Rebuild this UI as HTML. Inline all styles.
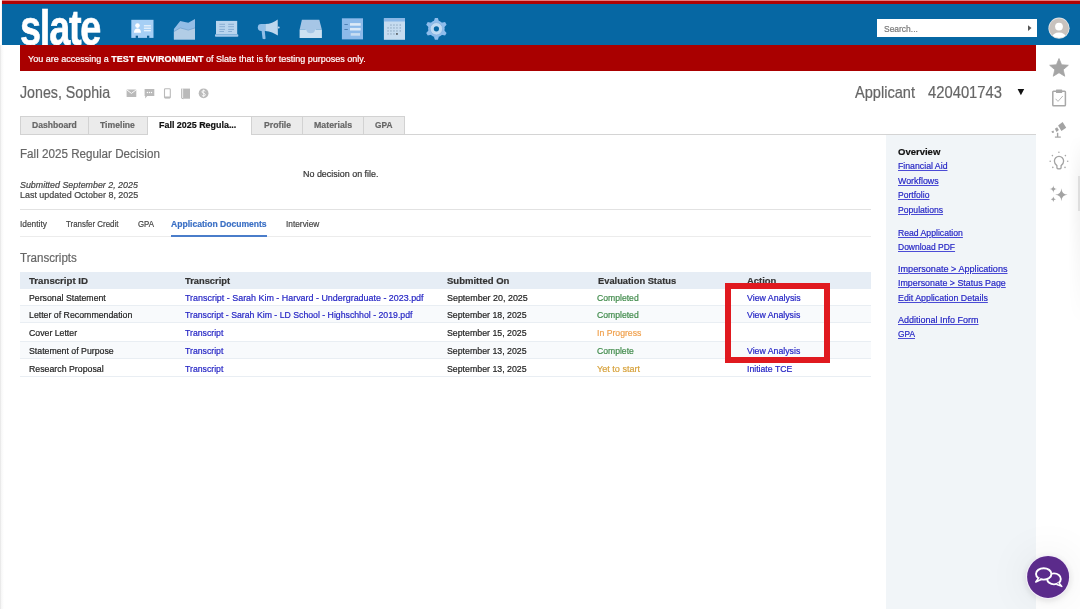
<!DOCTYPE html>
<html><head><meta charset="utf-8">
<style>
*{margin:0;padding:0;box-sizing:border-box}
html,body{width:1080px;height:609px;overflow:hidden;background:#fff;font-family:"Liberation Sans",sans-serif;color:#222}
.a{position:absolute}
.t{position:absolute;line-height:1;white-space:nowrap;-webkit-text-stroke:0.2px currentColor;font-variant-ligatures:none}
svg{position:absolute;overflow:visible}
</style></head><body>
<div class="a" style="left:0;top:45px;width:1px;height:564px;background:#eaeaea"></div><div class="a" style="left:1px;top:0;width:3px;height:609px;background:linear-gradient(to right,#f6f6f6,#fff)"></div>
<div class="a" style="left:2px;top:0;width:1078px;height:4px;background:#b00202"></div>
<div class="a" style="left:2px;top:0;width:1078px;height:1px;background:#e87a7a"></div>
<div class="a" style="left:2px;top:4px;width:1078px;height:41px;background:#0667a3"></div>
<div class="a" style="left:877px;top:19px;width:160px;height:18px;background:#fff"></div>
<svg style="left:0;top:0" width="1080" height="609">
 <polygon points="1028,25.2 1031.5,28.1 1028,31" fill="#555"/>
</svg>
<!-- sidebar -->
<div class="a" style="left:886px;top:135px;width:150px;height:474px;background:#f1f5f8"></div>
<!-- lines -->
<div class="a" style="left:20px;top:209px;width:851px;height:1px;background:#e2e2e2"></div>
<div class="a" style="left:20px;top:236px;width:851px;height:1px;background:#ececec"></div>
<div class="a" style="left:171px;top:235px;width:96px;height:2px;background:#4a7dca"></div>
<!-- table -->
<div class="a" style="left:20px;top:272px;width:851px;height:17px;background:#e6edf5"></div>
<div class="a" style="left:20px;top:305px;width:851px;height:18px;background:#f8fafc;border-top:1px solid #e9eef3;border-bottom:1px solid #e9eef3"></div>
<div class="a" style="left:20px;top:341px;width:851px;height:18px;background:#f8fafc;border-top:1px solid #e9eef3;border-bottom:1px solid #e9eef3"></div>
<div class="a" style="left:20px;top:376px;width:851px;height:1px;background:#e9eef3"></div>
<!-- tabs -->
<div class="a" style="left:20px;top:134px;width:1016px;height:1px;background:#d4d4d4"></div>
<div class="a" style="left:20px;top:116px;width:69px;height:19px;background:#ebebeb;border:1px solid #d2d2d2"></div>
<div class="a" style="left:88px;top:116px;width:60px;height:19px;background:#ebebeb;border:1px solid #d2d2d2"></div>
<div class="a" style="left:251px;top:116px;width:52px;height:19px;background:#ebebeb;border:1px solid #d2d2d2"></div>
<div class="a" style="left:302px;top:116px;width:62px;height:19px;background:#ebebeb;border:1px solid #d2d2d2"></div>
<div class="a" style="left:363px;top:116px;width:42px;height:19px;background:#ebebeb;border:1px solid #d2d2d2"></div>
<div class="a" style="left:147px;top:116px;width:105px;height:19px;background:#fff;border:1px solid #d2d2d2;border-bottom:none"></div>
<!-- logo -->
<div class="t" id="logo" style="left:19.6px;top:3.2px;font-size:49.5px;font-weight:bold;color:#fff;transform-origin:0 0;transform:scaleX(0.765);letter-spacing:-1.6px;-webkit-text-stroke:0.7px #fff">slate</div>
<div class="a" style="left:20px;top:45px;width:1016px;height:26px;background:#a90000"></div>
<svg style="left:0;top:0" width="1080" height="609">
 <!-- icon1 id card -->
 <rect x="131.3" y="19.8" width="22.2" height="18.1" fill="#a6cff5"/>
 <rect x="135.7" y="35.7" width="2.3" height="2.2" fill="#0b5f95"/>
 <rect x="147" y="35.7" width="2.3" height="2.2" fill="#0b5f95"/>
 <circle cx="137.5" cy="25.6" r="2.3" fill="#fff"/>
 <path d="M133.9 32.7 Q134.2 28.6 137.5 28.6 Q140.8 28.6 141 32.7 Z" fill="#fff"/>
 <rect x="143.9" y="25.2" width="7" height="1.2" fill="#eef6fd"/>
 <rect x="143.9" y="27.6" width="7" height="1.2" fill="#eef6fd"/>
 <rect x="143.9" y="30.1" width="7" height="1.2" fill="#eef6fd"/>
 <!-- icon2 area chart -->
 <polygon points="173.9,29 180.2,20.9 188.3,22.7 195,19 195,39.4 173.9,39.4" fill="#93bde6"/>
 <polygon points="173.9,31.6 180.2,27.9 188.3,30.1 195,27.9 195,39.4 173.9,39.4" fill="#b2cde6"/>
 <polyline points="173.9,31.6 180.2,27.9 188.3,30.1 195,27.9" fill="none" stroke="#6f9fcb" stroke-width="0.7"/>
 <!-- icon3 laptop -->
 <rect x="216" y="20.9" width="21.2" height="13.3" fill="#b9d5ee"/>
 <rect x="215" y="34.2" width="23.3" height="2.6" rx="0.8" fill="#a3c8ea"/>
 <g stroke="#82a9cf" stroke-width="0.9">
  <line x1="219.4" y1="24.3" x2="225" y2="24.3"/><line x1="228.2" y1="24.3" x2="234" y2="24.3"/>
  <line x1="219.4" y1="26.7" x2="225" y2="26.7"/><line x1="228.2" y1="26.7" x2="234" y2="26.7"/>
  <line x1="219.4" y1="29.4" x2="225" y2="29.4"/><line x1="228.2" y1="29.4" x2="234" y2="29.4"/>
  <line x1="219.4" y1="31.5" x2="224" y2="31.5"/><line x1="228.2" y1="31.5" x2="232" y2="31.5"/>
 </g>
 <!-- icon4 megaphone -->
 <path d="M261.6 31 L264.8 31 L265.6 38.8 Q264.2 39.6 262.6 38.8 Z" fill="#92bfe8"/>
 <path d="M265.5 24.1 L261.2 24.1 Q257.8 24.1 257.8 27.5 Q257.8 30.9 261.2 30.9 L265.5 30.9 Z" fill="#92bfe8"/>
 <path d="M265.3 24.1 Q272.5 23.6 277.7 19.4 L277.9 35.6 Q272.5 31.6 265.3 30.9 Z" fill="#bed7ee"/>
 <circle cx="278.7" cy="27.6" r="1" fill="#bed7ee"/>
 <!-- icon5 inbox -->
 <polygon points="301.9,19.8 319.3,19.8 321.9,29.8 299.6,29.8" fill="#a6c6e6"/>
 <rect x="305.5" y="29" width="10.5" height="5" fill="#a6c6e6"/>
 <path d="M299.6 29.8 L306.3 29.8 Q306.8 33.3 310.7 33.3 Q314.6 33.3 315.1 29.8 L321.9 29.8 L321.9 37.9 L299.6 37.9 Z" fill="#cde1f2"/>
 <!-- icon6 form -->
 <rect x="341.9" y="18.3" width="21.1" height="21.1" fill="#8cbaea"/>
 <rect x="350" y="23.1" width="10.7" height="2.6" fill="#dceaf7"/>
 <rect x="350" y="27.9" width="10.7" height="2.6" fill="#dceaf7"/>
 <rect x="350.7" y="33.1" width="9.3" height="2.6" fill="#c9def2"/>
 <rect x="344.4" y="24.1" width="3.4" height="0.8" fill="#3f72a6"/>
 <rect x="344.4" y="29" width="3.4" height="0.8" fill="#3f72a6"/>
 <!-- icon7 calendar -->
 <rect x="383.9" y="18.3" width="21.1" height="21.5" fill="#c6dcf0"/>
 <rect x="383.9" y="18.3" width="21.1" height="3.2" fill="#8ab8e8"/>
 <g fill="#90a9c2">
  <rect x="390.3" y="24.4" width="1.3" height="1.3"/><rect x="393.3" y="24.4" width="1.3" height="1.3"/><rect x="396.3" y="24.4" width="1.3" height="1.3"/><rect x="399.6" y="24.4" width="1.3" height="1.3"/>
  <rect x="387.4" y="27.3" width="1.3" height="1.3"/><rect x="390.3" y="27.3" width="1.3" height="1.3"/><rect x="393.3" y="27.3" width="1.3" height="1.3"/><rect x="396.3" y="27.3" width="1.3" height="1.3"/><rect x="399.6" y="27.3" width="1.3" height="1.3"/>
  <rect x="387.4" y="30.3" width="1.3" height="1.3"/><rect x="390.3" y="30.3" width="1.3" height="1.3"/><rect x="393.3" y="30.3" width="1.3" height="1.3"/><rect x="396.3" y="30.3" width="1.3" height="1.3"/><rect x="399.6" y="30.3" width="1.3" height="1.3"/>
  <rect x="387.4" y="33.3" width="1.3" height="1.3"/><rect x="390.3" y="33.3" width="1.3" height="1.3"/><rect x="393.3" y="33.3" width="1.3" height="1.3"/>
 </g>
 <rect x="396.2" y="33.2" width="1.5" height="1.5" fill="#333"/>
 <!-- icon8 gear -->
 <g transform="translate(436.4,28.8)">
  <g fill="#8fbdec">
   <circle r="8.3"/>
   <polygon points="-2.6,-7.4 2.6,-7.4 1.5,-10.9 -1.5,-10.9" transform="rotate(0)"/><polygon points="-2.6,-7.4 2.6,-7.4 1.5,-10.9 -1.5,-10.9" transform="rotate(60)"/><polygon points="-2.6,-7.4 2.6,-7.4 1.5,-10.9 -1.5,-10.9" transform="rotate(120)"/><polygon points="-2.6,-7.4 2.6,-7.4 1.5,-10.9 -1.5,-10.9" transform="rotate(180)"/><polygon points="-2.6,-7.4 2.6,-7.4 1.5,-10.9 -1.5,-10.9" transform="rotate(240)"/><polygon points="-2.6,-7.4 2.6,-7.4 1.5,-10.9 -1.5,-10.9" transform="rotate(300)"/>
  </g>
  <circle r="6.2" fill="#bfdaf3" stroke="#7aa9d9" stroke-width="0.6"/>
  <circle r="2.6" fill="#0667a3"/>
 </g>
 <!-- avatar -->
 <circle cx="1059" cy="28.2" r="10.6" fill="#dfe3e6"/>
 <clipPath id="avc"><circle cx="1059" cy="28.2" r="9.8"/></clipPath>
 <circle cx="1059" cy="28.2" r="9.8" fill="#c8c2be"/>
 <g clip-path="url(#avc)" fill="#fff">
  <circle cx="1059" cy="26.6" r="3.9"/>
  <ellipse cx="1059" cy="37.5" rx="7" ry="5"/>
 </g>
 <!-- name icons -->
 <g fill="#bababa">
  <rect x="126.6" y="89.5" width="9.7" height="7.5" rx="0.6"/>
  <path d="M144.6 89 H154.3 V96 H147.2 L145.2 98.6 V96 H144.6 Z"/>
  <rect x="164.5" y="88.7" width="5.8" height="9.3" rx="0.9" fill="none" stroke="#bababa" stroke-width="1.1"/>
  <rect x="164.5" y="96.6" width="5.8" height="1.6" rx="0.5"/>
  <rect x="182.4" y="88.6" width="7.6" height="10.1"/>
  <circle cx="203.6" cy="93.3" r="4.9"/>
 </g>
 <polyline points="126.8,89.9 131.45,93.4 136.1,89.9" fill="none" stroke="#fff" stroke-width="0.9"/>
 <g fill="#fff"><circle cx="147.4" cy="92.5" r="0.7"/><circle cx="149.45" cy="92.5" r="0.7"/><circle cx="151.5" cy="92.5" r="0.7"/></g>
 <path d="M181.6 88.6 V98.2 L183.3 98.8" fill="none" stroke="#bababa" stroke-width="1"/>
 <line x1="182.7" y1="89" x2="182.7" y2="98" stroke="#fff" stroke-width="0.6"/>
 <path d="M205.3 91.4 Q204.8 90.6 203.6 90.6 Q202 90.6 202 91.9 Q202 93 203.6 93.3 Q205.3 93.6 205.3 94.8 Q205.3 96 203.6 96 Q202.3 96 201.8 95.1" fill="none" stroke="#fff" stroke-width="1"/><line x1="203.6" y1="89.5" x2="203.6" y2="97.1" stroke="#fff" stroke-width="0.7"/>
 <!-- dropdown triangle -->
 <polygon points="1017.6,88.9 1024.2,88.9 1020.9,95.3" fill="#111"/>
 <!-- right rail icons -->
 <polygon fill="#a5a5a5" transform="translate(1059,68.3)" points="0.00,-9.80 2.59,-3.56 9.32,-3.03 4.18,1.36 5.76,7.93 0.00,4.40 -5.76,7.93 -4.18,1.36 -9.32,-3.03 -2.59,-3.56" stroke="#a5a5a5" stroke-width="0.8" stroke-linejoin="round"/>
 <rect x="1052.8" y="91.2" width="12.6" height="14.6" rx="0.8" fill="none" stroke="#a8a8a8" stroke-width="1.5"/>
 <rect x="1056" y="89.5" width="6.2" height="3.4" rx="0.5" fill="#a8a8a8"/>
 <polyline points="1055.6,98.8 1058,101.4 1062.8,96" fill="none" stroke="#b0b0b0" stroke-width="0.9"/>
 <g fill="#a3a3a3">
  <polygon points="1058.1,125.6 1062.6,122 1066.2,127.7 1061.4,130.9"/>
  <polygon points="1054.9,128.8 1057.1,127.3 1058.9,130.1 1056.5,131.9"/>
  <polygon points="1051.4,131.4 1053.5,130.6 1054.1,132.5 1052.3,133.1"/>
  <rect x="1056.9" y="132.8" width="1.4" height="4.2"/>
  <rect x="1054.9" y="136.5" width="5.9" height="1.2"/>
 </g>
 <g fill="none" stroke="#a3a3a3" stroke-width="1.3">
  <path d="M1056.9 167.5 V165.6 Q1054.4 164 1054.4 161 A4.6 4.6 0 1 1 1063.6 161 Q1063.6 164 1061.1 165.6 V167.5 Q1061.1 168.9 1059 168.9 Q1056.9 168.9 1056.9 167.5 Z"/>
 </g>
 <g fill="#a8a8a8">
  <circle cx="1058.9" cy="152.3" r="0.8"/><circle cx="1052.4" cy="155.6" r="0.8"/><circle cx="1065.4" cy="155.6" r="0.8"/>
  <circle cx="1050.2" cy="161.3" r="0.8"/><circle cx="1067.7" cy="161.3" r="0.8"/><circle cx="1052.8" cy="167.4" r="0.8"/><circle cx="1065" cy="167.4" r="0.8"/>
 </g>
 <g fill="#a3a3a3">
  <path d="M1061.40 188.20 Q1061.65 194.44 1067.70 194.70 Q1061.65 194.96 1061.40 201.20 Q1061.15 194.96 1055.10 194.70 Q1061.15 194.44 1061.40 188.20 Z"/>
  <path d="M1053.30 185.20 Q1053.45 188.94 1057.10 189.10 Q1053.45 189.26 1053.30 193.00 Q1053.15 189.26 1049.50 189.10 Q1053.15 188.94 1053.30 185.20 Z"/>
  <path d="M1053.30 196.60 Q1053.46 199.14 1055.90 199.30 Q1053.46 199.46 1053.30 202.00 Q1053.14 199.46 1050.70 199.30 Q1053.14 199.14 1053.30 196.60 Z"/>
 </g>
</svg>
<!-- right edge shadow / handle -->
<div class="a" style="left:1068px;top:135px;width:12px;height:260px;background:linear-gradient(to right, rgba(0,0,0,0), rgba(0,0,0,0.045));-webkit-mask-image:linear-gradient(to bottom, transparent 0, #000 45px, #000 80px, transparent 190px)"></div>
<div class="a" style="left:1078px;top:176px;width:2px;height:35px;background:#dedede"></div>
<div class="t" id="banner" style="left:28.20px;top:54.79px;font-size:9.30px;transform-origin:0 0;transform:scaleX(0.9695);color:#fff">You are accessing a <b>TEST ENVIRONMENT</b> of Slate that is for testing purposes only.</div>
<div class="t" id="search" style="left:883.80px;top:23.87px;font-size:9.50px;transform-origin:0 0;transform:scaleX(0.8906);color:#777">Search...</div>
<div class="t" id="name" style="left:19.80px;top:84.86px;font-size:16.00px;transform-origin:0 0;transform:scaleX(0.8889);color:#666">Jones, Sophia</div>
<div class="t" id="appl" style="left:855.00px;top:85.13px;font-size:15.70px;transform-origin:0 0;transform:scaleX(0.9303);color:#666">Applicant</div>
<div class="t" id="num" style="left:927.80px;top:85.15px;font-size:15.70px;transform-origin:0 0;transform:scaleX(0.9427);color:#666">420401743</div>
<div class="t" id="tab1" style="left:32.40px;top:120.23px;font-size:9.40px;transform-origin:0 0;transform:scaleX(0.9150);font-weight:bold;color:#666">Dashboard</div>
<div class="t" id="tab2" style="left:100.40px;top:120.23px;font-size:9.40px;transform-origin:0 0;transform:scaleX(0.9215);font-weight:bold;color:#666">Timeline</div>
<div class="t" id="tab3" style="left:159.00px;top:120.23px;font-size:9.40px;transform-origin:0 0;transform:scaleX(0.9513);font-weight:bold;color:#111">Fall 2025 Regula...</div>
<div class="t" id="tab4" style="left:264.00px;top:120.23px;font-size:9.40px;transform-origin:0 0;transform:scaleX(0.9300);font-weight:bold;color:#666">Profile</div>
<div class="t" id="tab5" style="left:314.00px;top:120.23px;font-size:9.40px;transform-origin:0 0;transform:scaleX(0.9377);font-weight:bold;color:#666">Materials</div>
<div class="t" id="tab6" style="left:375.00px;top:120.23px;font-size:9.40px;transform-origin:0 0;transform:scaleX(0.8854);font-weight:bold;color:#666">GPA</div>
<div class="t" id="h2" style="left:19.90px;top:147.96px;font-size:12.50px;transform-origin:0 0;transform:scaleX(0.9321);color:#666">Fall 2025 Regular Decision</div>
<div class="t" id="nodec" style="left:302.80px;top:169.59px;font-size:9.30px;transform-origin:0 0;transform:scaleX(0.9611);color:#333">No decision on file.</div>
<div class="t" id="subm" style="left:19.80px;top:179.63px;font-size:9.40px;transform-origin:0 0;transform:scaleX(0.9458);color:#444;font-style:italic">Submitted September 2, 2025</div>
<div class="t" id="upd" style="left:19.80px;top:190.23px;font-size:9.40px;transform-origin:0 0;transform:scaleX(0.9532);color:#444">Last updated October 8, 2025</div>
<div class="t" id="st1" style="left:19.80px;top:219.99px;font-size:9.30px;transform-origin:0 0;transform:scaleX(0.8971);color:#444">Identity</div>
<div class="t" id="st2" style="left:66.40px;top:219.99px;font-size:9.30px;transform-origin:0 0;transform:scaleX(0.8506);color:#444">Transfer Credit</div>
<div class="t" id="st3" style="left:138.20px;top:219.99px;font-size:9.30px;transform-origin:0 0;transform:scaleX(0.8417);color:#444">GPA</div>
<div class="t" id="st4" style="left:171.40px;top:219.99px;font-size:9.30px;transform-origin:0 0;transform:scaleX(0.9211);color:#3a6fc4;font-weight:bold">Application Documents</div>
<div class="t" id="st5" style="left:285.60px;top:219.99px;font-size:9.30px;transform-origin:0 0;transform:scaleX(0.8942);color:#444">Interview</div>
<div class="t" id="trans" style="left:19.80px;top:251.76px;font-size:12.50px;transform-origin:0 0;transform:scaleX(0.9265);color:#666">Transcripts</div>
<div class="t" id="th1" style="left:29.40px;top:276.59px;font-size:9.30px;transform-origin:0 0;transform:scaleX(1.0381);font-weight:bold;color:#333">Transcript ID</div>
<div class="t" id="th2" style="left:184.60px;top:276.59px;font-size:9.30px;transform-origin:0 0;transform:scaleX(1.0025);font-weight:bold;color:#333">Transcript</div>
<div class="t" id="th3" style="left:446.80px;top:276.59px;font-size:9.30px;transform-origin:0 0;transform:scaleX(1.0233);font-weight:bold;color:#333">Submitted On</div>
<div class="t" id="th4" style="left:597.80px;top:276.59px;font-size:9.30px;transform-origin:0 0;transform:scaleX(1.0014);font-weight:bold;color:#333">Evaluation Status</div>
<div class="t" id="th5" style="left:747.40px;top:276.59px;font-size:9.30px;transform-origin:0 0;transform:scaleX(1.0157);font-weight:bold;color:#333">Action</div>
<div class="t" id="r0c1" style="left:29.20px;top:294.39px;font-size:9.30px;transform-origin:0 0;transform:scaleX(0.9404);color:#222">Personal Statement</div>
<div class="t" id="r0c2" style="left:185.20px;top:294.39px;font-size:9.30px;transform-origin:0 0;transform:scaleX(0.9591);color:#2424c4">Transcript - Sarah Kim - Harvard - Undergraduate - 2023.pdf</div>
<div class="t" id="r0c3" style="left:447.40px;top:294.39px;font-size:9.30px;transform-origin:0 0;transform:scaleX(0.9585);color:#222">September 20, 2025</div>
<div class="t" id="r0c4" style="left:597.20px;top:294.39px;font-size:9.30px;transform-origin:0 0;transform:scaleX(0.9274);color:#3f8a4a">Completed</div>
<div class="t" id="r0c5" style="left:747.20px;top:294.39px;font-size:9.30px;transform-origin:0 0;transform:scaleX(0.9465);color:#2424c4">View Analysis</div>
<div class="t" id="r1c1" style="left:29.20px;top:311.39px;font-size:9.30px;transform-origin:0 0;transform:scaleX(0.9431);color:#222">Letter of Recommendation</div>
<div class="t" id="r1c2" style="left:185.20px;top:311.39px;font-size:9.30px;transform-origin:0 0;transform:scaleX(0.9379);color:#2424c4">Transcript - Sarah Kim - LD School - Highschhol - 2019.pdf</div>
<div class="t" id="r1c3" style="left:447.40px;top:311.39px;font-size:9.30px;transform-origin:0 0;transform:scaleX(0.9445);color:#222">September 18, 2025</div>
<div class="t" id="r1c4" style="left:597.20px;top:311.39px;font-size:9.30px;transform-origin:0 0;transform:scaleX(0.9274);color:#3f8a4a">Completed</div>
<div class="t" id="r1c5" style="left:747.20px;top:311.39px;font-size:9.30px;transform-origin:0 0;transform:scaleX(0.9404);color:#2424c4">View Analysis</div>
<div class="t" id="r2c1" style="left:29.20px;top:329.06px;font-size:9.30px;transform-origin:0 0;transform:scaleX(0.9390);color:#222">Cover Letter</div>
<div class="t" id="r2c2" style="left:185.20px;top:329.06px;font-size:9.30px;transform-origin:0 0;transform:scaleX(0.9366);color:#2424c4">Transcript</div>
<div class="t" id="r2c3" style="left:447.40px;top:329.06px;font-size:9.30px;transform-origin:0 0;transform:scaleX(0.9445);color:#222">September 15, 2025</div>
<div class="t" id="r2c4" style="left:597.20px;top:329.06px;font-size:9.30px;transform-origin:0 0;transform:scaleX(0.9329);color:#f0a04c">In Progress</div>
<div class="t" id="r3c1" style="left:29.20px;top:347.39px;font-size:9.30px;transform-origin:0 0;transform:scaleX(0.9422);color:#222">Statement of Purpose</div>
<div class="t" id="r3c2" style="left:185.20px;top:347.39px;font-size:9.30px;transform-origin:0 0;transform:scaleX(0.9366);color:#2424c4">Transcript</div>
<div class="t" id="r3c3" style="left:447.40px;top:347.39px;font-size:9.30px;transform-origin:0 0;transform:scaleX(0.9445);color:#222">September 13, 2025</div>
<div class="t" id="r3c4" style="left:597.20px;top:347.39px;font-size:9.30px;transform-origin:0 0;transform:scaleX(0.9253);color:#3f8a4a">Complete</div>
<div class="t" id="r3c5" style="left:747.20px;top:347.39px;font-size:9.30px;transform-origin:0 0;transform:scaleX(0.9404);color:#2424c4">View Analysis</div>
<div class="t" id="r4c1" style="left:29.20px;top:364.79px;font-size:9.30px;transform-origin:0 0;transform:scaleX(0.9441);color:#222">Research Proposal</div>
<div class="t" id="r4c2" style="left:185.20px;top:364.79px;font-size:9.30px;transform-origin:0 0;transform:scaleX(0.9366);color:#2424c4">Transcript</div>
<div class="t" id="r4c3" style="left:447.40px;top:364.79px;font-size:9.30px;transform-origin:0 0;transform:scaleX(0.9445);color:#222">September 13, 2025</div>
<div class="t" id="r4c4" style="left:597.20px;top:364.79px;font-size:9.30px;transform-origin:0 0;transform:scaleX(0.9777);color:#d7a23c">Yet to start</div>
<div class="t" id="r4c5" style="left:747.30px;top:364.79px;font-size:9.30px;transform-origin:0 0;transform:scaleX(0.9356);color:#2424c4">Initiate TCE</div>
<div class="t" id="sl0" style="left:897.80px;top:147.00px;font-size:9.80px;transform-origin:0 0;transform:scaleX(0.9712);font-weight:bold;color:#111">Overview</div>
<div class="t" id="sl1" style="left:897.80px;top:161.40px;font-size:9.80px;transform-origin:0 0;transform:scaleX(0.8908);color:#2424c4;text-decoration:underline;text-decoration-thickness:1px;text-underline-offset:1.2px;text-decoration-color:#4b4bd6">Financial Aid</div>
<div class="t" id="sl2" style="left:897.80px;top:175.60px;font-size:9.80px;transform-origin:0 0;transform:scaleX(0.9025);color:#2424c4;text-decoration:underline;text-decoration-thickness:1px;text-underline-offset:1.2px;text-decoration-color:#4b4bd6">Workflows</div>
<div class="t" id="sl3" style="left:897.80px;top:190.20px;font-size:9.80px;transform-origin:0 0;transform:scaleX(0.8748);color:#2424c4;text-decoration:underline;text-decoration-thickness:1px;text-underline-offset:1.2px;text-decoration-color:#4b4bd6">Portfolio</div>
<div class="t" id="sl4" style="left:897.80px;top:204.60px;font-size:9.80px;transform-origin:0 0;transform:scaleX(0.8797);color:#2424c4;text-decoration:underline;text-decoration-thickness:1px;text-underline-offset:1.2px;text-decoration-color:#4b4bd6">Populations</div>
<div class="t" id="sl5" style="left:897.80px;top:227.80px;font-size:9.80px;transform-origin:0 0;transform:scaleX(0.8825);color:#2424c4;text-decoration:underline;text-decoration-thickness:1px;text-underline-offset:1.2px;text-decoration-color:#4b4bd6">Read Application</div>
<div class="t" id="sl6" style="left:897.80px;top:241.60px;font-size:9.80px;transform-origin:0 0;transform:scaleX(0.8659);color:#2424c4;text-decoration:underline;text-decoration-thickness:1px;text-underline-offset:1.2px;text-decoration-color:#4b4bd6">Download PDF</div>
<div class="t" id="sl7" style="left:897.80px;top:263.60px;font-size:9.80px;transform-origin:0 0;transform:scaleX(0.9286);color:#2424c4;text-decoration:underline;text-decoration-thickness:1px;text-underline-offset:1.2px;text-decoration-color:#4b4bd6">Impersonate &gt; Applications</div>
<div class="t" id="sl8" style="left:897.80px;top:277.86px;font-size:9.80px;transform-origin:0 0;transform:scaleX(0.9055);color:#2424c4;text-decoration:underline;text-decoration-thickness:1px;text-underline-offset:1.2px;text-decoration-color:#4b4bd6">Impersonate &gt; Status Page</div>
<div class="t" id="sl9" style="left:897.80px;top:292.60px;font-size:9.80px;transform-origin:0 0;transform:scaleX(0.9016);color:#2424c4;text-decoration:underline;text-decoration-thickness:1px;text-underline-offset:1.2px;text-decoration-color:#4b4bd6">Edit Application Details</div>
<div class="t" id="sl10" style="left:897.80px;top:314.60px;font-size:9.80px;transform-origin:0 0;transform:scaleX(0.9184);color:#2424c4;text-decoration:underline;text-decoration-thickness:1px;text-underline-offset:1.2px;text-decoration-color:#4b4bd6">Additional Info Form</div>
<div class="t" id="sl11" style="left:897.80px;top:328.86px;font-size:9.80px;transform-origin:0 0;transform:scaleX(0.8498);color:#2424c4;text-decoration:underline;text-decoration-thickness:1px;text-underline-offset:1.2px;text-decoration-color:#4b4bd6">GPA</div>
<div class="a" style="left:725px;top:283px;width:105px;height:80px;border:6px solid #e0191f"></div>
<div class="a" style="left:1026px;top:555px;width:44px;height:44px;border-radius:50%;background:#f4eefa;box-shadow:0 2px 6px rgba(0,0,0,0.10), 0 0 40px 6px rgba(0,0,0,0.05)"></div>
<svg style="left:0;top:0" width="1080" height="609">
 <circle cx="1048.1" cy="576.9" r="21" fill="#5b2b8b"/>
 <ellipse cx="1054" cy="578.9" rx="6.8" ry="5.5" fill="#5b2b8b" stroke="#fff" stroke-width="1.9"/>
 <path d="M1058.8 582.6 L1061.8 586.4 L1056.4 584.2" fill="#5b2b8b" stroke="#fff" stroke-width="1.5" stroke-linejoin="round"/>
 <ellipse cx="1043.7" cy="573.9" rx="7.7" ry="5.7" fill="#5b2b8b" stroke="#fff" stroke-width="1.9"/>
 <path d="M1038.8 577.6 L1035.8 582 L1041.5 579.3" fill="#5b2b8b" stroke="#fff" stroke-width="1.6" stroke-linejoin="round"/>
</svg>
</body></html>
